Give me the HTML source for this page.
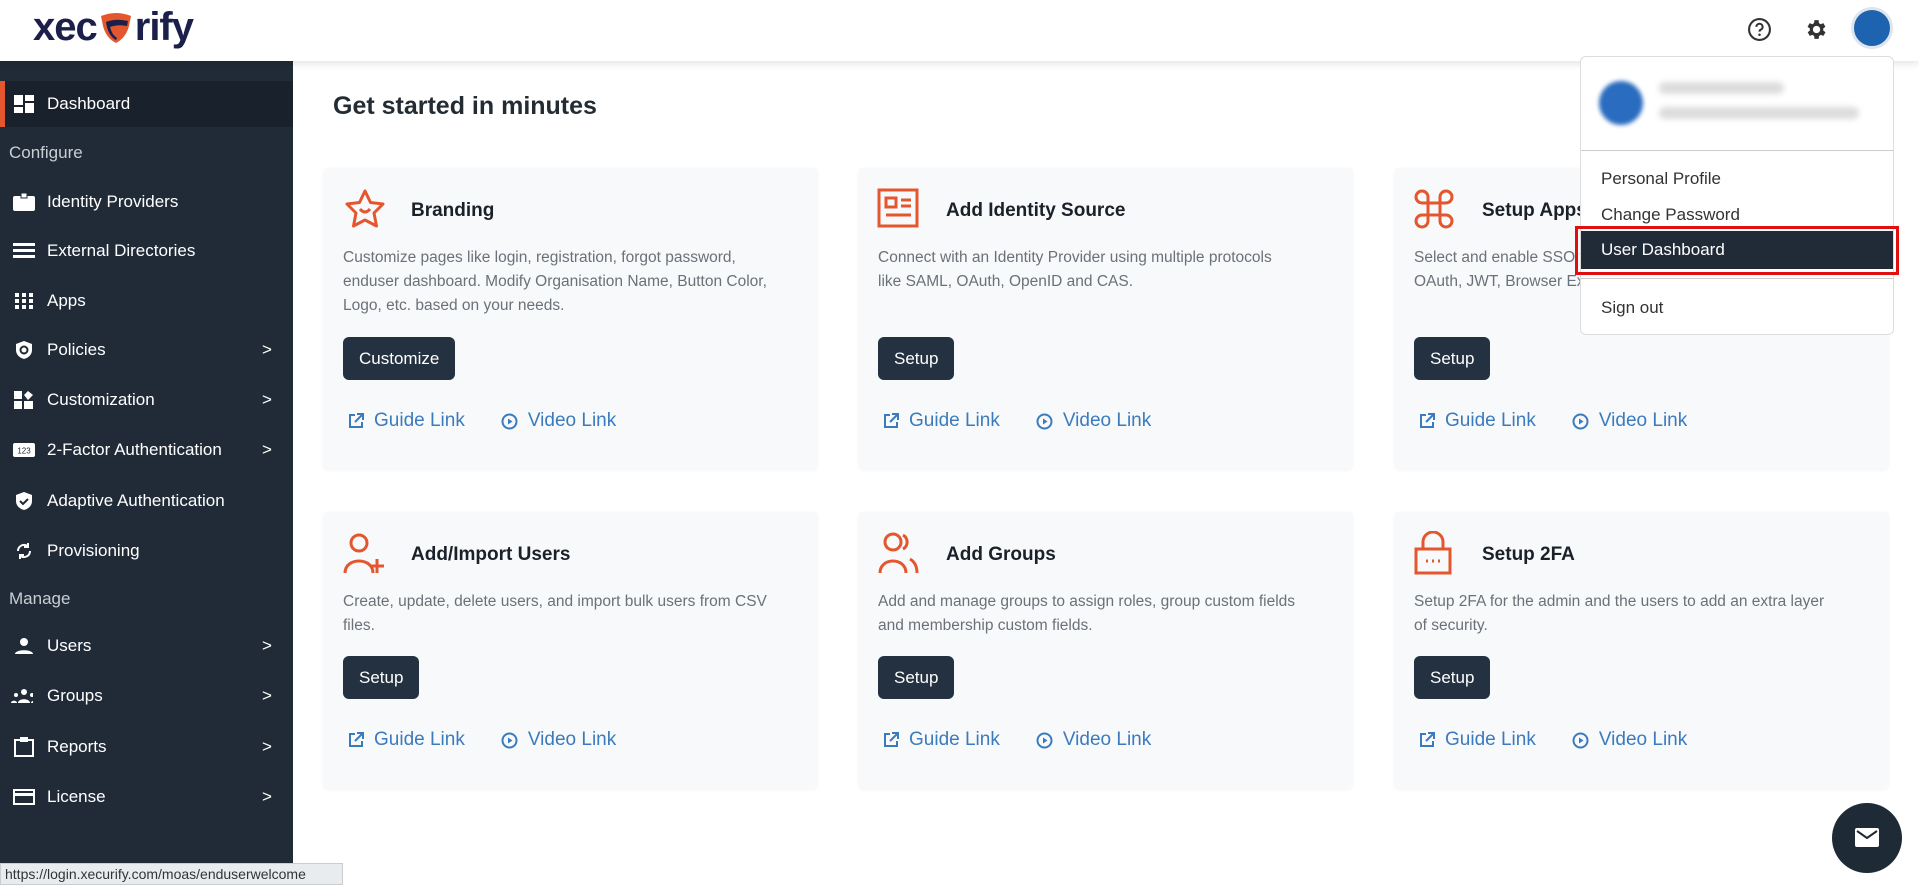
<!DOCTYPE html>
<html><head><meta charset="utf-8"><style>
*{box-sizing:border-box;margin:0;padding:0}
body{width:1919px;height:885px;overflow:hidden;background:#fff;font-family:"Liberation Sans",sans-serif;position:relative;color:#1f2933}
.hdr{position:absolute;left:0;top:0;width:1919px;height:61px;background:#fff;box-shadow:0 2px 8px rgba(0,0,0,.12);z-index:3}
.logo{position:absolute;left:33px;top:5px;font-size:40px;font-weight:bold;color:#1b1f4a;letter-spacing:-1px;display:flex;align-items:center}
.side{position:absolute;left:0;top:61px;width:293px;height:824px;background:#202b37;color:#fff}
.it{position:absolute;left:0;width:293px;height:46px;font-size:17px;display:flex;align-items:center}
.it .ic{position:absolute;left:13px;width:22px;height:20px;display:flex;align-items:center;justify-content:center}
.it .tx{position:absolute;left:47px}
.it .ar{position:absolute;left:262px;font-size:17px}
.sec{position:absolute;left:9px;font-size:17px;color:#c9ced4}
h1{position:absolute;left:333px;top:92px;font-size:25px;font-weight:bold;color:#232b33}
.card{position:absolute;width:495px;background:#f7f9fb;border-radius:6px;box-shadow:0 0 3px rgba(0,0,0,.04)}
.card .t{position:absolute;left:88px;font-size:19px;font-weight:bold;color:#1b2129}
.card .d{position:absolute;left:20px;font-size:15.5px;line-height:24px;color:#6b7178}
.card .b{position:absolute;left:20px;height:43px;background:#233141;color:#fff;font-size:17px;border-radius:6px;display:flex;align-items:center;padding:0 16px}
.card .l{position:absolute;left:25px;font-size:19px;color:#3b7bbd;display:flex;align-items:center;gap:10px}
.card .ico{position:absolute;left:19px}
.dd{position:absolute;left:1580px;top:56px;width:314px;height:279px;background:#fff;border:1px solid #ddd;border-radius:6px;z-index:5}
.dd .m{position:absolute;left:20px;font-size:17px;color:#333}
.fab{position:absolute;left:1832px;top:803px;width:70px;height:70px;border-radius:50%;background:#1f2a37}
.status{position:absolute;left:0;top:863px;width:343px;height:22px;background:#e9ecef;border:1px solid #ccc;font-size:14px;color:#333;padding:2px 4px;z-index:6}
</style></head><body>
<div class="hdr">
 <div class="logo">xec<svg width="36" height="32" viewBox="0 0 36 32" style="margin:0 1px"><path d="M3 4q15-6 30 0l-2 10q-3 12-13 17Q8 26 5 14z" fill="#e4572e"/><path d="M8 10q10-4 22-1l-1 5q-9-2-17 1q2 8 7 11l-1 2Q10 24 8 10z" fill="#1b1f4a"/></svg>rify</div>
 <svg style="position:absolute;left:1747px;top:17px" width="25" height="25" viewBox="0 0 24 24"><circle cx="12" cy="12" r="10" fill="none" stroke="#333" stroke-width="2"/><path d="M9 9.5a3 3 0 1 1 4 2.8c-.8.4-1 .9-1 1.7" fill="none" stroke="#333" stroke-width="2"/><circle cx="12" cy="17" r="1.2" fill="#333"/></svg>
 <svg style="position:absolute;left:1803px;top:17px" width="25" height="25" viewBox="0 0 24 24"><path fill="#333" d="M19.4 13a7.5 7.5 0 0 0 0-2l2.1-1.6-2-3.5-2.5 1a7 7 0 0 0-1.7-1L15 3h-4l-.4 2.9a7 7 0 0 0-1.700 1l-2.5-1-2 3.5L6.6 11a7.5 7.5 0 0 0 0 2l-2.1 1.6 2 3.5 2.5-1a7 7 0 0 0 1.7 1L11 21h4l.4-2.9a7 7 0 0 0 1.7-1l2.5 1 2-3.5zM13 15.5a3.5 3.5 0 1 1 0-7 3.5 3.5 0 0 1 0 7z"/></svg>
 <div style="position:absolute;left:1851px;top:7px;width:42px;height:42px;border-radius:50%;background:#1e63b0;border:3px solid #dfe5ec"></div>
</div>
<div class="side">
 <div class="it" style="top:20px;background:#19222c;border-left:5px solid #e4572e"><span class="ic" style="left:8px"><svg width="20" height="18"><rect x="0" y="0" width="9" height="10" fill="#fff"/><rect x="11" y="0" width="9" height="6" fill="#fff"/><rect x="0" y="12" width="9" height="6" fill="#fff"/><rect x="11" y="8" width="9" height="10" fill="#fff"/></svg></span><span class="tx" style="left:42px">Dashboard</span></div>
 <div class="sec" style="top:82px">Configure</div>
 <div class="it" style="top:118px"><span class="ic"><svg width="22" height="18"><rect x="0" y="3" width="22" height="15" rx="2" fill="#fff"/><rect x="8" y="0" width="6" height="5" fill="#fff" stroke="#202b37"/></svg></span><span class="tx">Identity Providers</span></div>
 <div class="it" style="top:167px"><span class="ic"><svg width="22" height="16"><rect y="0" width="22" height="3" fill="#fff"/><rect y="6" width="22" height="3" fill="#fff"/><rect y="12" width="22" height="3" fill="#fff"/></svg></span><span class="tx">External Directories</span></div>
 <div class="it" style="top:217px"><span class="ic"><svg width="18" height="16"><g fill="#fff"><rect x="0" y="0" width="4" height="4"/><rect x="7" y="0" width="4" height="4"/><rect x="14" y="0" width="4" height="4"/><rect x="0" y="6" width="4" height="4"/><rect x="7" y="6" width="4" height="4"/><rect x="14" y="6" width="4" height="4"/><rect x="0" y="12" width="4" height="4"/><rect x="7" y="12" width="4" height="4"/><rect x="14" y="12" width="4" height="4"/></g></svg></span><span class="tx">Apps</span></div>
 <div class="it" style="top:266px"><span class="ic"><svg width="20" height="20" viewBox="0 0 20 20"><path d="M10 1l8 3v6c0 5-4 8-8 9-4-1-8-4-8-9V4z" fill="#fff"/><circle cx="10" cy="10" r="3.5" fill="none" stroke="#202b37" stroke-width="2"/></svg></span><span class="tx">Policies</span><span class="ar">&gt;</span></div>
 <div class="it" style="top:316px"><span class="ic"><svg width="20" height="18"><rect x="0" y="0" width="8" height="8" fill="#fff"/><rect x="0" y="10" width="8" height="8" fill="#fff"/><rect x="10" y="10" width="9" height="8" fill="#fff"/><path d="M14 0l5 4-5 5-4-5z" fill="#fff"/></svg></span><span class="tx">Customization</span><span class="ar">&gt;</span></div>
 <div class="it" style="top:366px"><span class="ic"><svg width="22" height="14"><rect width="22" height="14" rx="2" fill="#fff"/><text x="11" y="10.5" font-size="8" text-anchor="middle" fill="#202b37" font-family="Liberation Sans">123</text></svg></span><span class="tx">2-Factor Authentication</span><span class="ar">&gt;</span></div>
 <div class="it" style="top:417px"><span class="ic"><svg width="20" height="20" viewBox="0 0 20 20"><path d="M10 1l8 3v6c0 5-4 8-8 9-4-1-8-4-8-9V4z" fill="#fff"/><path d="M6 10l3 3 5-5" stroke="#202b37" stroke-width="2" fill="none"/></svg></span><span class="tx">Adaptive Authentication</span></div>
 <div class="it" style="top:467px"><span class="ic"><svg width="20" height="20" viewBox="0 0 20 20" fill="none" stroke="#fff" stroke-width="2"><path d="M4 10a6 6 0 0 1 10-4.5M16 10a6 6 0 0 1-10 4.5"/><path d="M14 2v4h-4M6 18v-4h4"/></svg></span><span class="tx">Provisioning</span></div>
 <div class="sec" style="top:528px">Manage</div>
 <div class="it" style="top:562px"><span class="ic"><svg width="18" height="16"><circle cx="9" cy="4" r="4" fill="#fff"/><path d="M0 16c0-5 18-5 18 0z" fill="#fff"/></svg></span><span class="tx">Users</span><span class="ar">&gt;</span></div>
 <div class="it" style="top:612px"><span class="ic" style="left:11px"><svg width="26" height="14"><circle cx="13" cy="3" r="3" fill="#fff"/><circle cx="5" cy="6" r="2" fill="#fff"/><circle cx="21" cy="6" r="2" fill="#fff"/><path d="M7 14c0-5 12-5 12 0zM0 14c0-3 6-3 6 0zM20 14c0-3 6-3 6 0z" fill="#fff"/></svg></span><span class="tx">Groups</span><span class="ar">&gt;</span></div>
 <div class="it" style="top:663px"><span class="ic"><svg width="20" height="20"><rect x="1" y="3" width="18" height="16" fill="none" stroke="#fff" stroke-width="2"/><rect x="6" y="0" width="8" height="5" fill="#fff"/></svg></span><span class="tx">Reports</span><span class="ar">&gt;</span></div>
 <div class="it" style="top:713px"><span class="ic"><svg width="22" height="16"><rect x="1" y="1" width="20" height="14" fill="none" stroke="#fff" stroke-width="2"/><rect x="1" y="4" width="20" height="3" fill="#fff"/></svg></span><span class="tx">License</span><span class="ar">&gt;</span></div>
</div>
<h1>Get started in minutes</h1>

<div class="card" style="left:323px;top:168px;height:303px">
 <svg class="ico" style="top:19px" width="46" height="46" viewBox="0 0 46 46"><path d="M23 4l5.5 11.5 12.5 1.5-9 9 2.5 13L23 33l-11.5 6 2.5-13-9-9 12.5-1.5z" fill="none" stroke="#e4572e" stroke-width="3" stroke-linejoin="round"/><path d="M18 22q5 6 10 0" fill="none" stroke="#e4572e" stroke-width="3"/></svg>
 <div class="t" style="top:32px">Branding</div>
 <div class="d" style="top:78px">Customize pages like login, registration, forgot password,<br>enduser dashboard. Modify Organisation Name, Button Color,<br>Logo, etc. based on your needs.</div>
 <div class="b" style="top:169px">Customize</div>
 <div class="l" style="top:242px"><svg width="16" height="16" viewBox="0 0 16 16" fill="none" stroke="#3b7bbd" stroke-width="2"><path d="M7 2H2v12h12V9M9 1h6v6M15 1L7 9"/></svg>Guide Link<span style="width:16px"></span><svg width="17" height="17" viewBox="0 0 17 17"><circle cx="8.5" cy="8.5" r="7" fill="none" stroke="#3b7bbd" stroke-width="2"/><path d="M7 5.5v6l4.5-3z" fill="#3b7bbd"/></svg>Video Link</div>
</div>
<div class="card" style="left:858px;top:168px;height:303px">
 <svg class="ico" style="top:20px" width="42" height="40" viewBox="0 0 42 40" fill="none" stroke="#e4572e" stroke-width="3"><rect x="2" y="2" width="38" height="36"/><rect x="9" y="10" width="10" height="9"/><path d="M24 12h10M24 18h10M9 27h25"/></svg>
 <div class="t" style="top:32px">Add Identity Source</div>
 <div class="d" style="top:78px">Connect with an Identity Provider using multiple protocols<br>like SAML, OAuth, OpenID and CAS.</div>
 <div class="b" style="top:169px">Setup</div>
 <div class="l" style="top:242px"><svg width="16" height="16" viewBox="0 0 16 16" fill="none" stroke="#3b7bbd" stroke-width="2"><path d="M7 2H2v12h12V9M9 1h6v6M15 1L7 9"/></svg>Guide Link<span style="width:16px"></span><svg width="17" height="17" viewBox="0 0 17 17"><circle cx="8.5" cy="8.5" r="7" fill="none" stroke="#3b7bbd" stroke-width="2"/><path d="M7 5.5v6l4.5-3z" fill="#3b7bbd"/></svg>Video Link</div>
</div>
<div class="card" style="left:1394px;top:168px;height:303px">
 <svg class="ico" style="top:20px" width="42" height="42" viewBox="0 0 42 42" fill="none" stroke="#e4572e" stroke-width="3"><path d="M15 15H9a6 6 0 1 1 6-6zM27 15V9a6 6 0 1 1 6 6zM15 27v6a6 6 0 1 1-6-6zM27 27h6a6 6 0 1 1-6 6z"/><rect x="15" y="15" width="12" height="12"/></svg>
 <div class="t" style="top:32px">Setup Apps</div>
 <div class="d" style="top:78px">Select and enable SSO for your apps using SAML,<br>OAuth, JWT, Browser Extension.</div>
 <div class="b" style="top:169px">Setup</div>
 <div class="l" style="top:242px"><svg width="16" height="16" viewBox="0 0 16 16" fill="none" stroke="#3b7bbd" stroke-width="2"><path d="M7 2H2v12h12V9M9 1h6v6M15 1L7 9"/></svg>Guide Link<span style="width:16px"></span><svg width="17" height="17" viewBox="0 0 17 17"><circle cx="8.5" cy="8.5" r="7" fill="none" stroke="#3b7bbd" stroke-width="2"/><path d="M7 5.5v6l4.5-3z" fill="#3b7bbd"/></svg>Video Link</div>
</div>
<div class="card" style="left:323px;top:512px;height:278px">
 <svg class="ico" style="top:19px" width="44" height="44" viewBox="0 0 44 44" fill="none" stroke="#e4572e" stroke-width="3"><circle cx="17" cy="12" r="8"/><path d="M3 42c0-16 28-16 28 0"/><path d="M35 28v14M28 35h14"/></svg>
 <div class="t" style="top:32px">Add/Import Users</div>
 <div class="d" style="top:78px">Create, update, delete users, and import bulk users from CSV<br>files.</div>
 <div class="b" style="top:144px">Setup</div>
 <div class="l" style="top:217px"><svg width="16" height="16" viewBox="0 0 16 16" fill="none" stroke="#3b7bbd" stroke-width="2"><path d="M7 2H2v12h12V9M9 1h6v6M15 1L7 9"/></svg>Guide Link<span style="width:16px"></span><svg width="17" height="17" viewBox="0 0 17 17"><circle cx="8.5" cy="8.5" r="7" fill="none" stroke="#3b7bbd" stroke-width="2"/><path d="M7 5.5v6l4.5-3z" fill="#3b7bbd"/></svg>Video Link</div>
</div>
<div class="card" style="left:858px;top:512px;height:278px">
 <svg class="ico" style="top:19px" width="44" height="44" viewBox="0 0 44 44" fill="none" stroke="#e4572e" stroke-width="3"><circle cx="16" cy="11" r="8"/><path d="M3 42c0-16 26-16 26 0"/><path d="M26 4a8 8 0 0 1 0 14M33 28c5 3 7 8 7 14"/></svg>
 <div class="t" style="top:32px">Add Groups</div>
 <div class="d" style="top:78px">Add and manage groups to assign roles, group custom fields<br>and membership custom fields.</div>
 <div class="b" style="top:144px">Setup</div>
 <div class="l" style="top:217px"><svg width="16" height="16" viewBox="0 0 16 16" fill="none" stroke="#3b7bbd" stroke-width="2"><path d="M7 2H2v12h12V9M9 1h6v6M15 1L7 9"/></svg>Guide Link<span style="width:16px"></span><svg width="17" height="17" viewBox="0 0 17 17"><circle cx="8.5" cy="8.5" r="7" fill="none" stroke="#3b7bbd" stroke-width="2"/><path d="M7 5.5v6l4.5-3z" fill="#3b7bbd"/></svg>Video Link</div>
</div>
<div class="card" style="left:1394px;top:512px;height:278px">
 <svg class="ico" style="top:19px" width="40" height="44" viewBox="0 0 40 44" fill="none" stroke="#e4572e" stroke-width="3"><rect x="3" y="18" width="34" height="24"/><path d="M10 18V11a10 10 0 0 1 20 0v7"/><path d="M13 30h2M19 30h2M25 30h2"/></svg>
 <div class="t" style="top:32px">Setup 2FA</div>
 <div class="d" style="top:78px">Setup 2FA for the admin and the users to add an extra layer<br>of security.</div>
 <div class="b" style="top:144px">Setup</div>
 <div class="l" style="top:217px"><svg width="16" height="16" viewBox="0 0 16 16" fill="none" stroke="#3b7bbd" stroke-width="2"><path d="M7 2H2v12h12V9M9 1h6v6M15 1L7 9"/></svg>Guide Link<span style="width:16px"></span><svg width="17" height="17" viewBox="0 0 17 17"><circle cx="8.5" cy="8.5" r="7" fill="none" stroke="#3b7bbd" stroke-width="2"/><path d="M7 5.5v6l4.5-3z" fill="#3b7bbd"/></svg>Video Link</div>
</div>

<div class="dd">
 <div style="position:absolute;left:18px;top:24px;width:44px;height:44px;border-radius:50%;background:#2a6cbf;filter:blur(2px)"></div>
 <div style="position:absolute;left:78px;top:25px;width:125px;height:12px;background:#dcdcdc;border-radius:6px;filter:blur(3px)"></div>
 <div style="position:absolute;left:78px;top:50px;width:200px;height:12px;background:#dcdcdc;border-radius:6px;filter:blur(3px)"></div>
 <div style="position:absolute;left:0;top:93px;width:312px;border-top:1px solid #ccc"></div>
 <div class="m" style="top:112px">Personal Profile</div>
 <div class="m" style="top:148px">Change Password</div>
 <div style="position:absolute;left:0;top:174px;width:312px;height:38px;background:#202b37"></div>
 <div class="m" style="top:183px;color:#fff">User Dashboard</div>
 <div style="position:absolute;left:-6px;top:169px;width:324px;height:49px;border:3px solid #e01010"></div>
 <div style="position:absolute;left:0;top:221px;width:312px;border-top:1px solid #ccc"></div>
 <div class="m" style="top:241px">Sign out</div>
</div>

<div class="fab"><svg style="position:absolute;left:23px;top:25px" width="24" height="19" viewBox="0 0 24 19"><rect width="24" height="19" rx="2" fill="#fff"/><path d="M2 3l10 7 10-7" fill="none" stroke="#1f2a37" stroke-width="2"/></svg></div>
<div class="status">https://login.xecurify.com/moas/enduserwelcome</div>
</body></html>
